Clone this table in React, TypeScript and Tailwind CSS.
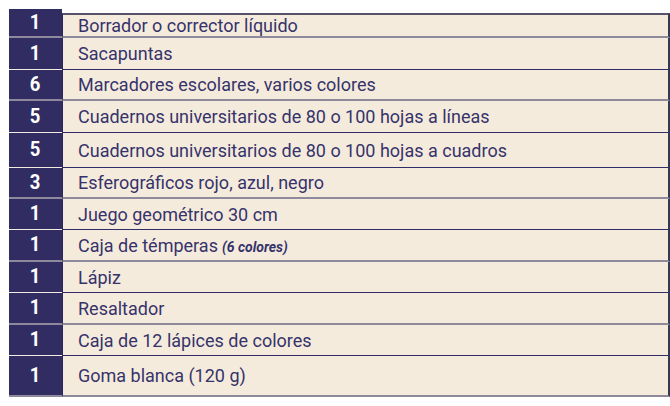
import React from 'react';

interface Item {
  qty: number;
  label: string;
  note?: string;
  h: string;
  line: 'gray' | 'navy';
}

const items: Item[] = [
  { qty: 1, label: 'Borrador o corrector líquido', h: 'h-[29px]', line: 'gray' },
  { qty: 1, label: 'Sacapuntas', h: 'h-[32px]', line: 'navy' },
  { qty: 6, label: 'Marcadores escolares, varios colores', h: 'h-[31px]', line: 'gray' },
  { qty: 5, label: 'Cuadernos universitarios de 80 o 100 hojas a líneas', h: 'h-[32px]', line: 'navy' },
  { qty: 5, label: 'Cuadernos universitarios de 80 o 100 hojas a cuadros', h: 'h-[35px]', line: 'navy' },
  { qty: 3, label: 'Esferográficos rojo, azul, negro', h: 'h-[31px]', line: 'gray' },
  { qty: 1, label: 'Juego geométrico 30 cm', h: 'h-[31px]', line: 'navy' },
  { qty: 1, label: 'Caja de témperas', note: '(6 colores)', h: 'h-[32px]', line: 'gray' },
  { qty: 1, label: 'Lápiz', h: 'h-[31px]', line: 'navy' },
  { qty: 1, label: 'Resaltador', h: 'h-[32px]', line: 'gray' },
  { qty: 1, label: 'Caja de 12 lápices de colores', h: 'h-[31px]', line: 'navy' },
  { qty: 1, label: 'Goma blanca (120 g)', h: 'h-[41px]', line: 'gray' },
];

const Row: React.FC<{ item: Item; first: boolean }> = ({ item, first }) => {
  const gray = item.line === 'gray';
  return (
    <div className={`flex ${item.h}`}>
      <div
        className={`w-[53px] shrink-0 flex items-center justify-center bg-[#312d63] text-white font-bold text-[21px] ${
          gray ? 'border-b-2 border-[#8e8a9c]' : 'border-b border-[#f3ece0]'
        }`}
      >
        <span className="inline-block scale-x-[0.88]">{item.qty}</span>
      </div>
      <div
        className={`flex-1 flex items-center pl-[15px] bg-[#f5ebdc] text-[#36336b] text-[18px] border-l border-r-2 border-l-[#2b2858] border-r-[#3a3750] ${
          first ? 'mt-[4px] border-t-2 border-t-[#55526a]' : ''
        } ${gray ? 'border-b-2 border-b-[#8e8a9c]' : 'border-b border-b-[#2f2c68]'}`}
      >
        <span>
          {item.label}
          {item.note && (
            <span className="ml-[4px] text-[14px] font-bold italic">{item.note}</span>
          )}
        </span>
      </div>
    </div>
  );
};

export default function App() {
  return (
    <div className="w-[670px] h-[406px] bg-white pl-[9px] pt-[9px] overflow-hidden" style={{ fontFamily: 'Roboto, "Liberation Sans", sans-serif' }}>
      <div className="flex flex-col w-[661px]">
        {items.map((item, i) => (
          <Row key={i} item={item} first={i === 0} />
        ))}
      </div>
    </div>
  );
}
